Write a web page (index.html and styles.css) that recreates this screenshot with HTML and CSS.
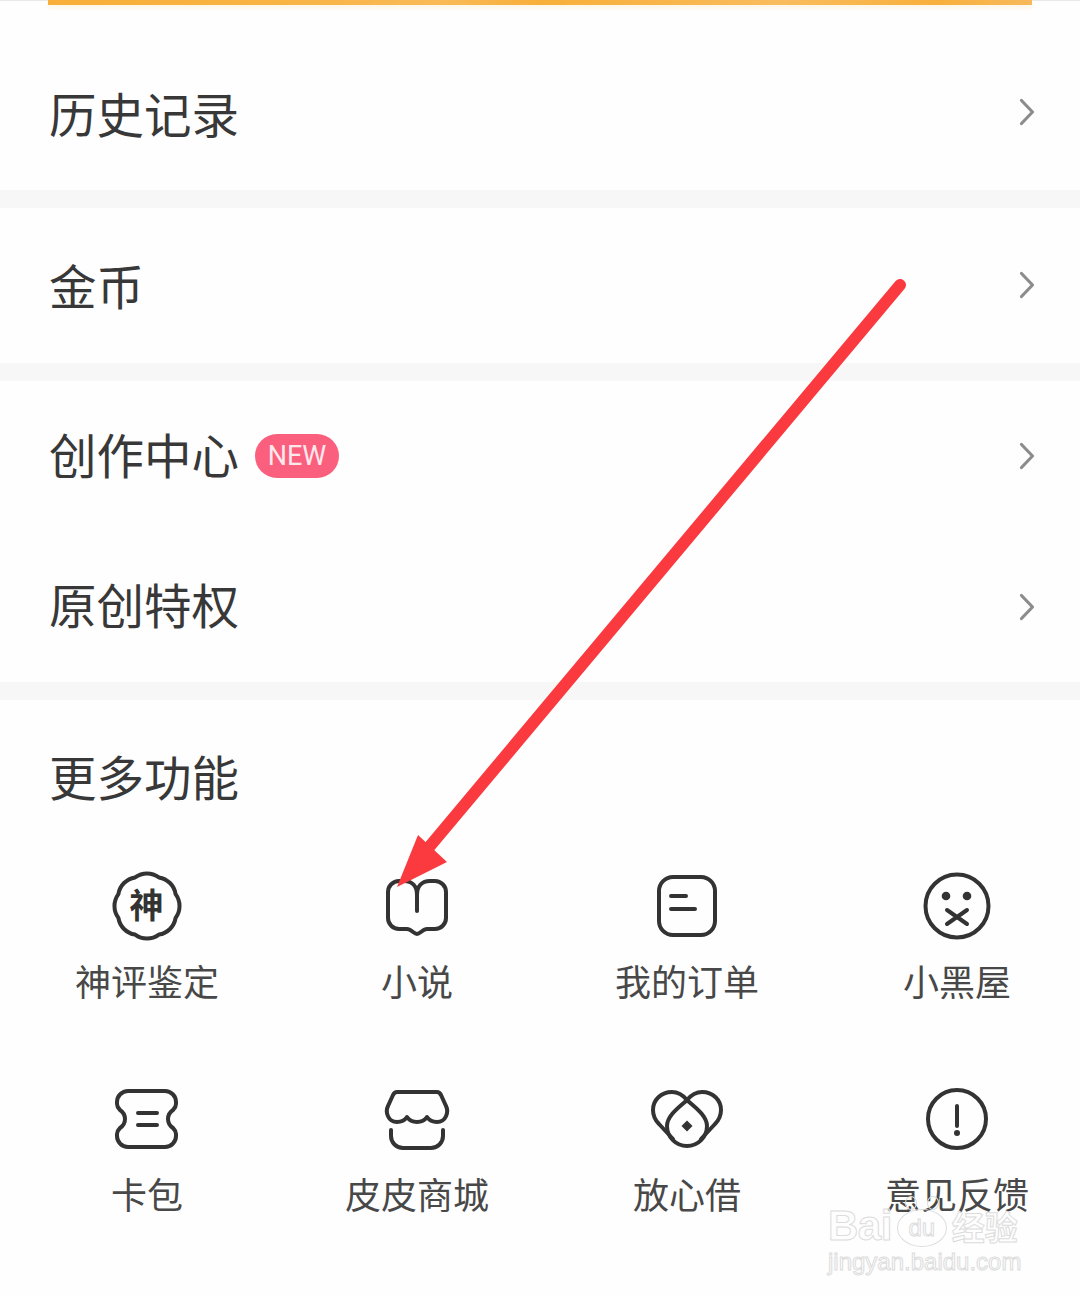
FILE: index.html
```html
<!DOCTYPE html>
<html lang="zh-CN">
<head>
<meta charset="utf-8">
<title>更多功能</title>
<link rel="stylesheet" href="styles.css">
</head>
<body>
<div class="page">
  <div class="top"><div class="progress"></div></div>

  <section class="group">
    <div class="row row-first"><span class="row-title">历史记录</span><svg class="chev" viewBox="0 0 16 28"><path d="M2.5 2.5 13.5 14 2.5 25.5"/></svg></div>
  </section>
  <section class="group">
    <div class="row row-coin"><span class="row-title">金币</span><svg class="chev" viewBox="0 0 16 28"><path d="M2.5 2.5 13.5 14 2.5 25.5"/></svg></div>
  </section>
  <section class="group">
    <div class="row row-create"><span class="row-title">创作中心<span class="badge">NEW</span></span><svg class="chev" viewBox="0 0 16 28"><path d="M2.5 2.5 13.5 14 2.5 25.5"/></svg></div>
    <div class="row row-orig"><span class="row-title">原创特权</span><svg class="chev" viewBox="0 0 16 28"><path d="M2.5 2.5 13.5 14 2.5 25.5"/></svg></div>
  </section>

  <section class="more">
    <h2 class="row-title more-title">更多功能</h2>
    <div class="grid">
      <div class="cell">
        <svg class="ico" viewBox="0 0 80 80"><path d="M51.9 11.4A20 20 0 0 1 68.6 28.1A20 20 0 0 1 68.6 51.9A20 20 0 0 1 51.9 68.6A20 20 0 0 1 28.1 68.6A20 20 0 0 1 11.4 51.9A20 20 0 0 1 11.4 28.1A20 20 0 0 1 28.1 11.4A20 20 0 0 1 51.9 11.4Z"/><text class="ico-char" x="39.5" y="52" text-anchor="middle">神</text></svg>
        <span class="label">神评鉴定</span>
      </div>
      <div class="cell">
        <svg class="ico" viewBox="0 0 80 80"><path d="M40 45V29C40 20 35 15 27 15H22A11 11 0 0 0 11 26V52A11 11 0 0 0 22 63H30C34 63 37 68 40 68C43 68 46 63 50 63H58A11 11 0 0 0 69 52V26A11 11 0 0 0 58 15H53C45 15 40 20 40 29"/></svg>
        <span class="label">小说</span>
      </div>
      <div class="cell">
        <svg class="ico" viewBox="0 0 80 80"><rect x="12" y="11" width="56" height="58" rx="14"/><path d="M24 30H39M24 43H48"/></svg>
        <span class="label">我的订单</span>
      </div>
      <div class="cell">
        <svg class="ico" viewBox="0 0 80 80"><circle cx="40" cy="40" r="31.5"/><circle class="solid" cx="29" cy="30" r="4.3"/><circle class="solid" cx="50" cy="30" r="4.3"/><path d="M30 44 50 58M50 44 30 58"/></svg>
        <span class="label">小黑屋</span>
      </div>
      <div class="cell">
        <svg class="ico" viewBox="0 0 80 80"><path d="M21 12H58A11 11 0 0 1 69 23V25C69 28 68 29 66 31C63 33 61 36 61 40C61 44 63 47 66 49C68 51 69 52 69 55V57A11 11 0 0 1 58 68H21A11 11 0 0 1 10 57V55C10 52 11 51 13 49C16 47 18 44 18 40C18 36 16 33 13 31C11 29 10 28 10 25V23A11 11 0 0 1 21 12Z"/><path d="M31 34H50M31 46H50"/></svg>
        <span class="label">卡包</span>
      </div>
      <div class="cell">
        <svg class="ico" viewBox="0 0 80 80"><path d="M20 13H60C62 13 63 14 64 16L69 27C72 33 69 43 60 43C55 43 52 41 50 38C48 41 44 43 40 43C36 43 32 41 30 38C28 41 25 43 20 43C11 43 8 33 11 27L16 16C17 14 18 13 20 13Z"/><path d="M14 51V57A12 12 0 0 0 26 69H54A12 12 0 0 0 66 57V51"/></svg>
        <span class="label">皮皮商城</span>
      </div>
      <div class="cell">
        <svg class="ico" viewBox="0 0 80 80"><path d="M40 21C46 27 60 36 60 47A20 20 0 0 1 20 47C20 36 34 27 40 21Z"/><path d="M40 21C35 15 31 13 25 13C14 13 6 21 6 31C6 37 9 42 12 45L26 60M40 21C45 15 49 13 55 13C66 13 74 21 74 31C74 37 71 42 68 45L54 60"/><path class="solid" d="M40 41.5 45.5 47 40 52.5 34.5 47Z"/></svg>
        <span class="label">放心借</span>
      </div>
      <div class="cell">
        <svg class="ico" viewBox="0 0 80 80"><circle cx="40" cy="40" r="29"/><path d="M40 27V47"/><circle class="solid" cx="40" cy="54" r="3"/></svg>
        <span class="label">意见反馈</span>
      </div>
    </div>
  </section>

  <svg class="arrow" viewBox="0 0 1080 1296">
    <path class="arrow-shaft" d="M900 285 425 852"/>
    <path class="arrow-head" d="M397 887 418 835 447 862Z"/>
  </svg>

  <div class="mark">
    <div class="mark-top"><span class="mark-en">Bai</span><span class="mark-paw"><span class="mark-toe"></span><span class="mark-toe"></span><span class="mark-du">du</span></span><span class="mark-cn">经验</span></div>
    <div class="mark-url">jingyan.baidu.com</div>
  </div>
</div>
</body>
</html>
```
FILE: styles.css
```css
* { box-sizing: border-box; }
html, body { margin: 0; padding: 0; background: #fefefe; }
body { font-family: "Noto Sans CJK SC", "Noto Sans", sans-serif; color: #333; }
.page { position: relative; width: 1080px; height: 1296px; overflow: hidden; background: #fefefe; }

.top { height: 5px; padding: 0 48px; background: linear-gradient(#e8e8e8 1px, #fefefe 1px); }
.progress {
  height: 5px;
  background: linear-gradient(90deg, #f8ae38 0, #f8b445 25%, #f9ba58 40%, #f8af3a 50%, #f9bc5e 75%, #f8b03c 90%, #f7b95a 100%);
  box-shadow: 0 3px 5px #fff4e0;
}

.group { border-bottom: 18px solid #f7f7f7; }
.row { display: flex; align-items: center; justify-content: space-between; padding: 0 45px 0 49px; }
.row-first { height: 185px; padding-top: 36px; }
.row-coin { height: 155px; padding-top: 5px; }
.row-create { height: 151px; }
.row-orig { height: 150px; }

.row-title { display: flex; align-items: center; margin: 0; padding-bottom: 7px; font-size: 47.5px; font-weight: 400; line-height: 59px; color: #383838; }
.chev { width: 16px; height: 28px; fill: none; stroke: #8c8c8c; stroke-width: 3.2; stroke-linecap: round; stroke-linejoin: round; }
.row-first .chev { margin-bottom: 8px; }
.row-coin .chev { margin-bottom: 6px; }
.row-create .chev { margin-bottom: 2px; }
.row-orig .chev { margin-bottom: 0; }

.badge {
  display: inline-flex; align-items: center; justify-content: center;
  width: 84px; height: 44px; margin: 5px 0 0 16px; border-radius: 22px;
  background: #fb5f7e; color: #fde8ec;
  font-family: "Roboto", "Noto Sans", sans-serif; font-size: 27px; line-height: 44px;
}

.more { padding: 46px 0 0; }
.more-title { padding-left: 49px; }
.grid { display: grid; grid-template-columns: repeat(4, 270px); grid-auto-rows: 213px; padding: 54px 0 0 12px; }
.cell { display: flex; flex-direction: column; align-items: center; }
.ico { width: 80px; height: 80px; fill: none; stroke: #333; stroke-width: 4; stroke-linecap: round; stroke-linejoin: round; }
.ico .solid { fill: #333; stroke: none; }
.ico-char { fill: #333; stroke: none; font-size: 34px; font-weight: 700; font-family: "Noto Sans CJK SC", sans-serif; }
.label { margin-top: 9px; font-size: 36px; line-height: 50px; color: #484848; white-space: nowrap; }

.arrow { position: absolute; left: 0; top: 0; width: 1080px; height: 1296px; pointer-events: none; }
.arrow-shaft { fill: none; stroke: #fb3a40; stroke-width: 12; stroke-linecap: round; }
.arrow-head { fill: #fb3a40; }

.mark { position: absolute; left: 828px; top: 1204px; width: 196px; color: rgba(255,255,255,.55); -webkit-text-stroke: 1px #dcdcdc; }
.mark-top { display: flex; align-items: center; height: 44px; }
.mark-en { font-family: "Liberation Sans", sans-serif; font-weight: 700; font-size: 42px; line-height: 44px; letter-spacing: -0.5px; }
.mark-paw { position: relative; display: flex; flex: none; align-items: center; justify-content: center; width: 50px; height: 38px; margin: 4px 5px 0 5px; border: 1.5px solid #dcdcdc; border-radius: 50%; }
.mark-du { font-family: "Liberation Sans", sans-serif; font-size: 24px; line-height: 30px; }
.mark-toe { position: absolute; top: -14px; left: 7px; width: 12px; height: 14px; border: 1.5px solid #dcdcdc; border-radius: 50%; }
.mark-toe + .mark-toe { left: 29px; }
.mark-cn { font-size: 33px; font-weight: 700; line-height: 44px; white-space: nowrap; }
.mark-url { font-family: "Liberation Sans", sans-serif; font-size: 24px; line-height: 28px; white-space: nowrap; }
```
